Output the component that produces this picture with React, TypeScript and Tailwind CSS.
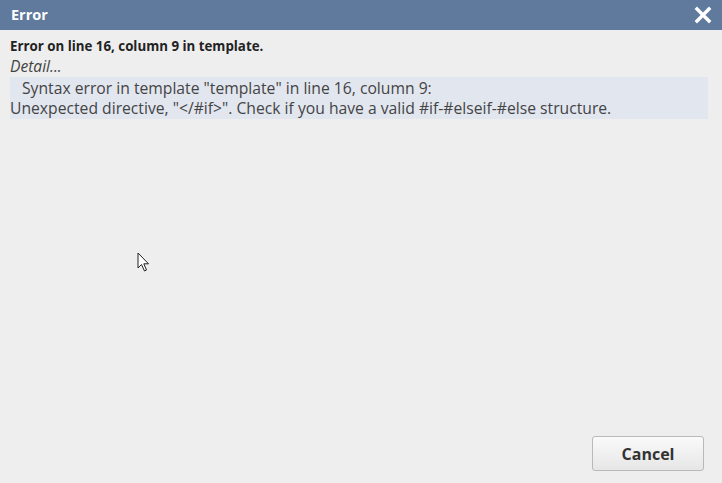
export default function App() {
  return (
    <div
      className="w-[722px] h-[483px] flex flex-col bg-[#eeeeee] text-[#333333] overflow-hidden"
      style={{ fontFamily: '"Open Sans", "Noto Sans", sans-serif' }}
    >
      <div className="h-[30px] shrink-0 flex items-center justify-between bg-[#5f7a9d] pl-[11px] pr-[10px]">
        <span className="text-white font-bold text-[14.5px] leading-none">Error</span>
        <svg width="18" height="18" viewBox="0 0 18 18" className="text-white">
          <path d="M3 3L15 15M15 3L3 15" stroke="currentColor" strokeWidth="3.4" strokeLinecap="square" />
        </svg>
      </div>
      <div className="flex-1 flex flex-col pl-[10px] pr-[14px] pt-[7px] pb-[12px]">
        <div className="font-bold text-[13.3px] leading-[19px] text-[#222222]">Error on line 16, column 9 in template.</div>
        <div className="italic text-[15.6px] leading-[21px] text-[#444444]">Detail...</div>
        <div className="bg-[#e2e6ef] text-[15.7px] leading-[20px] text-[#444444] pt-[1px] pb-[1px]">
          <div className="pl-[12px]">Syntax error in template "template" in line 16, column 9:</div>
          <div>Unexpected directive, "&lt;/#if&gt;". Check if you have a valid #if-#elseif-#else structure.</div>
        </div>
        <div className="flex-1 relative">
          <svg width="14" height="22" viewBox="0 0 14 22" className="absolute left-[127px] top-[133px]">
            <path d="M1 1L1 16L4.5 12.5L7.5 19L9.5 18L6.8 11.8L11.5 11.8Z" fill="white" stroke="#222" strokeWidth="1" strokeLinejoin="round" />
          </svg>
        </div>
        <div className="flex justify-end pr-[4px]">
          <button className="w-[112px] h-[35px] rounded-[3px] border border-[#b9b9b9] bg-gradient-to-b from-[#fafafa] to-[#e6e6e6] text-[16px] font-bold text-[#333333]">
            Cancel
          </button>
        </div>
      </div>
    </div>
  );
}
